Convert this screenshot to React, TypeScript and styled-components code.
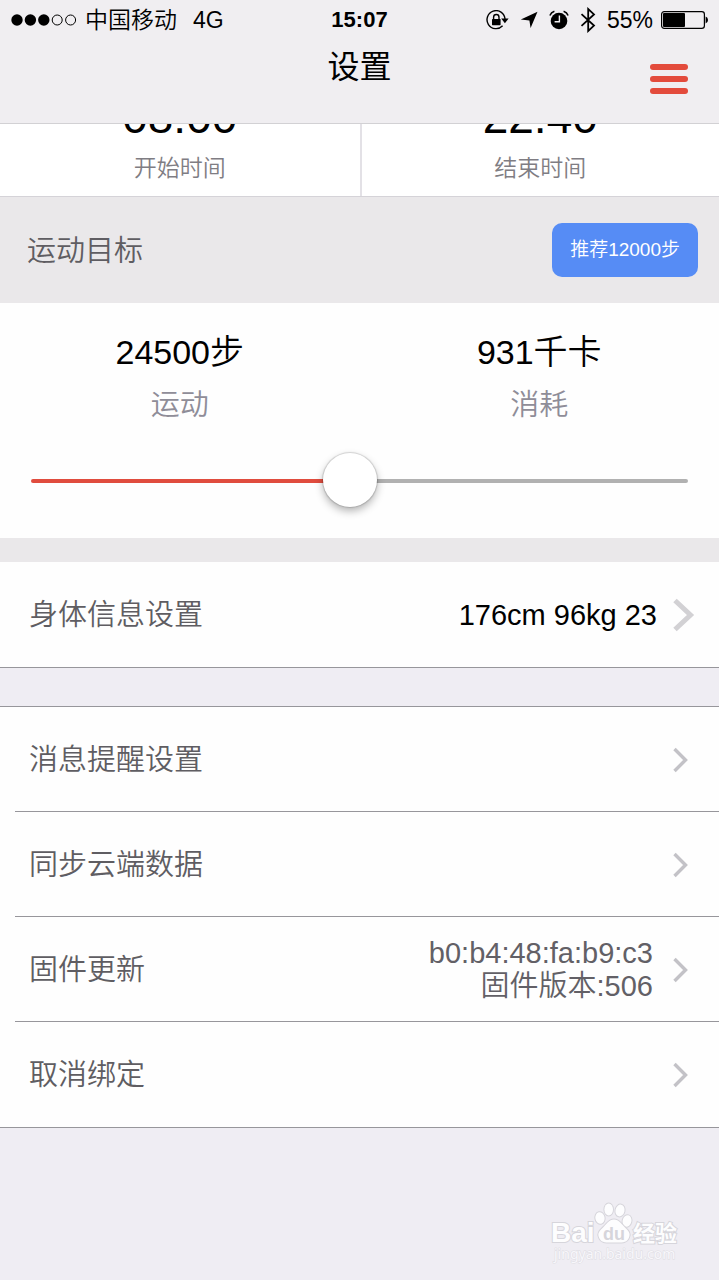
import React, { useState } from "react";
import styled, { createGlobalStyle } from "styled-components";

const GlobalStyle = createGlobalStyle`
  * { box-sizing: border-box; }
  body {
    margin: 0;
    background: #efedf3;
    color: #000;
    font-family: "Liberation Sans", "Noto Sans CJK SC", sans-serif;
  }
  button { font: inherit; border: 0; padding: 0; cursor: pointer; }
`;

const Page = styled.div`
  position: relative;
  display: flex;
  flex-direction: column;
  min-height: 100vh;
`;

const Header = styled.header`
  background: #f0eef1;
  border-bottom: 1px solid #d2d1d4;
`;

const StatusBar = styled.div`
  display: grid;
  grid-template-columns: 1fr auto 1fr;
  align-items: center;
  height: 40px;
  padding: 0 11px;
  font-size: 23px;
  line-height: 24px;
`;

const StatusGroup = styled.div<{ $end?: boolean }>`
  display: flex;
  align-items: center;
  justify-content: ${(p) => (p.$end ? "flex-end" : "flex-start")};
  gap: ${(p) => (p.$end ? 11 : 8)}px;
`;

const Carrier = styled.span`
  font-weight: 350;
  margin-right: 8px;
`;

const Clock = styled.span`
  font-size: 22px;
  font-weight: bold;
`;

const Battery = styled.span`
  display: flex;
  align-items: center;
  gap: 8px;
`;

const NavBar = styled.div`
  display: grid;
  grid-template-columns: 1fr auto 1fr;
  height: 83px;
  padding: 0 30px;
`;

const Title = styled.h1`
  grid-column: 2;
  margin: 0;
  padding-top: 7px;
  font-size: 32px;
  line-height: 40px;
  font-weight: 400;
`;

const MenuButton = styled.button`
  display: flex;
  flex-direction: column;
  justify-self: end;
  align-self: start;
  gap: 6px;
  width: 40px;
  padding: 24px 1px 12px;
  background: none;
`;

const MenuBar = styled.span`
  height: 6px;
  border-radius: 3px;
  background: #e34b3c;
`;

const Columns = styled.div`
  display: grid;
  grid-template-columns: 1fr 1fr;
`;

const TimeRow = styled(Columns)`
  height: 73px;
  overflow: hidden;
  background: #fff;
  border-bottom: 1px solid #d5d3d8;
`;

const TimeCell = styled.div`
  display: flex;
  flex-direction: column;
  align-items: center;
  justify-content: flex-end;
  min-height: 0;
  padding-bottom: 14px;
  & + & { border-left: 2px solid #e3e1e6; }
`;

const TimeValue = styled.span`
  font-size: 46px;
  line-height: 52px;
`;

const TimeLabel = styled.span`
  margin-top: 11px;
  font-size: 23px;
  line-height: 28px;
  font-weight: 350;
  color: #7f7d83;
`;

const GoalBar = styled.div`
  display: flex;
  align-items: center;
  justify-content: space-between;
  height: 106px;
  padding: 0 21px 0 27px;
  background: #eae8ea;
`;

const GoalTitle = styled.h2`
  margin: 0;
  padding-top: 2px;
  font-size: 29px;
  line-height: 36px;
  font-weight: 350;
  color: #5f5d62;
`;

const RecommendButton = styled.button`
  padding: 14px 18px;
  border-radius: 10px;
  background: #568cf5;
  color: #fff;
  && { font-size: 19px; line-height: 26px; font-weight: 350; }
`;

const GoalPanel = styled.section`
  height: 235px;
  padding-top: 29px;
  background: #fefefe;
`;

const Stat = styled.div`
  display: flex;
  flex-direction: column;
  align-items: center;
  gap: 13px;
`;

const StatValue = styled.span`
  font-size: 34px;
  line-height: 40px;
  font-weight: 350;
`;

const StatLabel = styled.span`
  font-size: 29px;
  line-height: 40px;
  font-weight: 350;
  color: #8f8d98;
`;

const SliderField = styled.div`
  padding: 29px 31px 0;
`;

const Slider = styled.input`
  display: block;
  width: 100%;
  height: 54px;
  margin: 0;
  appearance: none;
  background: none;
  &::-webkit-slider-runnable-track {
    height: 4px;
    border-radius: 2px;
    background: linear-gradient(to right, #e04c3e var(--fill), #b1b1b1 var(--fill));
  }
  &::-webkit-slider-thumb {
    appearance: none;
    width: 54px;
    height: 54px;
    margin-top: -26px;
    border-radius: 50%;
    background: #fff;
    box-shadow: 0 0 1px 1px rgba(0, 0, 0, 0.14), 0 4px 8px rgba(0, 0, 0, 0.3);
  }
`;

const Divider = styled.div`
  height: 24px;
  background: #eae8ea;
`;

const List = styled.ul<{ $top?: boolean }>`
  list-style: none;
  margin: 0;
  padding: 0;
  background: #fefefe;
  border-top: ${(p) => (p.$top ? "1px solid #97969b" : "0")};
  border-bottom: 1px solid #97969b;
`;

const Item = styled.li`
  & + & > button::before {
    content: "";
    position: absolute;
    inset: -1px 0 auto 15px;
    border-top: 1px solid #97969b;
  }
`;

const RowButton = styled.button`
  position: relative;
  display: flex;
  align-items: center;
  width: 100%;
  height: 105px;
  padding: 1px 22px 0 29px;
  background: none;
  text-align: left;
`;

const RowLabel = styled.span`
  flex: 1;
  font-size: 29px;
  line-height: 36px;
  font-weight: 350;
  color: #5f5d62;
`;

const RowValue = styled.span<{ $strong?: boolean }>`
  margin-right: ${(p) => (p.$strong ? 14 : 18)}px;
  font-size: 29px;
  line-height: 33px;
  font-weight: 350;
  text-align: right;
  white-space: pre-line;
  color: ${(p) => (p.$strong ? "#000" : "#626066")};
`;

const Spacer = styled.div`
  height: 38px;
`;

const Watermark = styled.div`
  position: absolute;
  right: 38px;
  bottom: 14px;
  line-height: 0;
`;

function Chevron({ large }: { large?: boolean }) {
  return large ? (
    <svg width="26" height="36" viewBox="0 0 26 36" fill="none" aria-hidden="true">
      <path d="M4 3.5 19.5 18 4 32.5" stroke="#d2d1d4" strokeWidth="5" />
    </svg>
  ) : (
    <svg width="26" height="28" viewBox="0 0 26 28" fill="none" aria-hidden="true">
      <path d="M3.500 3 14.500 14 3.500 25" stroke="#c3c2c7" strokeWidth="3.4" />
    </svg>
  );
}

function SignalDots() {
  return (
    <svg width="66" height="12" viewBox="0 0 66 12" aria-hidden="true">
      {[0, 1, 2, 3, 4].map((i) => (
        <circle
          key={i}
          cx={6 + i * 13.4}
          cy="6"
          r={i < 3 ? 5.7 : 5}
          fill={i < 3 ? "#000" : "none"}
          stroke={i < 3 ? "none" : "#000"}
          strokeWidth="1"
        />
      ))}
    </svg>
  );
}

function StatusIcons() {
  return (
    <>
      <svg width="23" height="20" viewBox="0 0 23 20" aria-hidden="true">
        <path d="M16.6 15.8A9 9 0 1 1 19 9" fill="none" stroke="#000" strokeWidth="1.4" />
        <path d="M15.2 8.6h7.4l-3.7 4.6z" />
        <rect x="6" y="9" width="8.6" height="6.2" rx="0.6" />
        <path d="M7.6 9.5V7.2a2.7 2.7 0 0 1 5.4 0v2.3" fill="none" stroke="#000" strokeWidth="1.4" />
      </svg>
      <svg width="18" height="18" viewBox="0 0 18 18" aria-hidden="true">
        <path d="M17.5 0.8 10.6 17 9.4 9.4 0.8 8.4z" />
      </svg>
      <svg width="20" height="20" viewBox="0 0 20 20" aria-hidden="true">
        <circle cx="10" cy="11" r="8.3" />
        <path d="M10.4 5.6v6.1H5.6" fill="none" stroke="#f0eef1" strokeWidth="1.4" />
        <path d="M0.9 5.4Q2 2.4 5.4 1.3M19.1 5.4Q18 2.4 14.6 1.3" fill="none" stroke="#000" strokeWidth="1.5" />
      </svg>
      <svg width="16" height="26" viewBox="0 0 16 26" aria-hidden="true">
        <path d="M1.5 7.2 14 18.6 8.2 24V2L14 7.4 1.5 18.8" fill="none" stroke="#000" strokeWidth="1.8" />
      </svg>
    </>
  );
}

function BatteryIcon() {
  return (
    <svg width="47" height="18" viewBox="0 0 47 18" aria-hidden="true">
      <rect x="0.6" y="0.6" width="42.8" height="16.8" rx="2.6" fill="none" stroke="#000" strokeWidth="1.2" />
      <rect x="2" y="2" width="22" height="14" rx="1" />
      <path d="M44.6 5.5q2.4 0.8 2.4 3.5t-2.4 3.5z" />
    </svg>
  );
}

function BaiduMark() {
  return (
    <svg width="130" height="64" viewBox="0 0 130 64" aria-hidden="true">
      <g fill="#fdfdfe" stroke="#d6d5db" strokeWidth="2" paintOrder="stroke">
        <text x="0" y="40" fontFamily="Liberation Sans" fontWeight="bold" fontSize="28">Bai</text>
        <ellipse cx="49" cy="16" rx="4.6" ry="5.800" transform="rotate(-12 49 16)" />
        <ellipse cx="57.700" cy="7.500" rx="4.300" ry="6" />
        <ellipse cx="69" cy="8.500" rx="4.500" ry="6" transform="rotate(12 69 8.500)" />
        <ellipse cx="76" cy="19" rx="4.400" ry="5.800" transform="rotate(14 76 19)" />
        <path d="M63 17.500c5 0 7 4 10 7 4 4 7 6 5 11-2 5.500-7 5-15 5s-13 .5-15-5c-2-5 1-7 5-11 3-3 5-7 10-7z" />
        <text x="82" y="39" fontFamily="Noto Sans CJK SC" fontWeight="bold" fontSize="22">经验</text>
      </g>
      <g fill="#f8f7fb" stroke="#dddce2" strokeWidth="1" paintOrder="stroke">
        <text x="3" y="57" fontFamily="Noto Sans" fontSize="14">jingyan.baidu.com</text>
      </g>
      <text x="63" y="38" textAnchor="middle" fontFamily="Liberation Sans" fontWeight="bold" fontSize="18" fill="#d6d5db">du</text>
    </svg>
  );
}

const MIN_STEPS = 1000;
const MAX_STEPS = 49500;
const KCAL_PER_STEP = 0.038;

const settings = [
  { label: "消息提醒设置" },
  { label: "同步云端数据" },
  { label: "固件更新", value: "b0:b4:48:fa:b9:c3\n固件版本:506" },
  { label: "取消绑定" },
];

export default function App() {
  const [steps, setSteps] = useState(24500);
  const fill = `${((steps - MIN_STEPS) / (MAX_STEPS - MIN_STEPS)) * 100}%`;

  return (
    <Page>
      <GlobalStyle />
      <Header>
        <StatusBar>
          <StatusGroup>
            <SignalDots />
            <Carrier>中国移动</Carrier>
            <span>4G</span>
          </StatusGroup>
          <Clock>15:07</Clock>
          <StatusGroup $end>
            <StatusIcons />
            <Battery>
              <span>55%</span>
              <BatteryIcon />
            </Battery>
          </StatusGroup>
        </StatusBar>
        <NavBar>
          <Title>设置</Title>
          <MenuButton type="button" aria-label="菜单">
            <MenuBar />
            <MenuBar />
            <MenuBar />
          </MenuButton>
        </NavBar>
      </Header>

      <main>
        <TimeRow>
          <TimeCell>
            <TimeValue>08:00</TimeValue>
            <TimeLabel>开始时间</TimeLabel>
          </TimeCell>
          <TimeCell>
            <TimeValue>22:40</TimeValue>
            <TimeLabel>结束时间</TimeLabel>
          </TimeCell>
        </TimeRow>

        <GoalBar>
          <GoalTitle>运动目标</GoalTitle>
          <RecommendButton type="button" onClick={() => setSteps(12000)}>
            推荐12000步
          </RecommendButton>
        </GoalBar>

        <GoalPanel>
          <Columns>
            <Stat>
              <StatValue>{steps}步</StatValue>
              <StatLabel>运动</StatLabel>
            </Stat>
            <Stat>
              <StatValue>{Math.round(steps * KCAL_PER_STEP)}千卡</StatValue>
              <StatLabel>消耗</StatLabel>
            </Stat>
          </Columns>
          <SliderField>
            <Slider
              type="range"
              aria-label="运动目标"
              min={MIN_STEPS}
              max={MAX_STEPS}
              step={500}
              value={steps}
              onChange={(e) => setSteps(Number(e.target.value))}
              style={{ "--fill": fill } as React.CSSProperties}
            />
          </SliderField>
        </GoalPanel>

        <Divider />

        <List>
          <Item>
            <RowButton type="button">
              <RowLabel>身体信息设置</RowLabel>
              <RowValue $strong>176cm 96kg 23</RowValue>
              <Chevron large />
            </RowButton>
          </Item>
        </List>

        <Spacer />

        <List $top>
          {settings.map((s) => (
            <Item key={s.label}>
              <RowButton type="button">
                <RowLabel>{s.label}</RowLabel>
                {s.value && <RowValue>{s.value}</RowValue>}
                <Chevron />
              </RowButton>
            </Item>
          ))}
        </List>
      </main>

      <Watermark>
        <BaiduMark />
      </Watermark>
    </Page>
  );
}
